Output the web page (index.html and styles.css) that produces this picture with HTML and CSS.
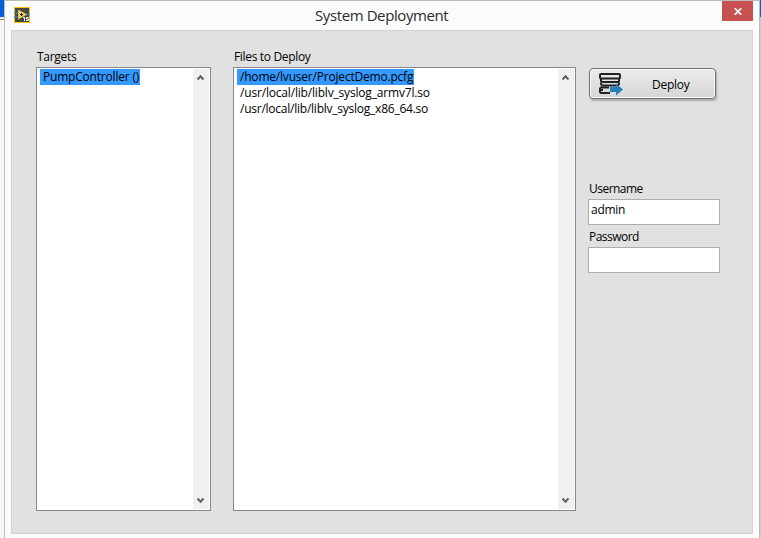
FILE: index.html
```
<!DOCTYPE html>
<html lang="en">
<head>
<meta charset="utf-8">
<title>System Deployment</title>
<link rel="stylesheet" href="styles.css">
</head>
<body>
<div class="desktop">
  <div class="behind"></div>
  <main class="window">
    <header class="titlebar">
      <svg class="app-icon" width="16" height="16" viewBox="0 0 16 16">
        <rect width="16" height="16" fill="#fcc010"/>
        <rect x="1" y="1" width="14" height="14" fill="#454749"/>
        <path d="M0 6h5M0 10h4M12 7.500h4" stroke="#2c83b8" stroke-width="1.600"/>
        <path d="M5 3v9l8-4.500z" fill="#f4cf60"/>
        <path d="M4.500 3v9.500" stroke="#e8b830"/>
        <path d="M6 7.500h3M7.500 6v3" stroke="#222"/>
        <path d="M9 10.500h1.500V14M14.500 10.500h-2v1.500h2v1.500h-2.500" fill="none" stroke="#fff"/>
      </svg>
      <h1 class="title"><span>System Deployment</span></h1>
      <button class="close" aria-label="Close">
        <svg width="8" height="7" viewBox="0 0 8 7"><path d="M.7 .2l6.600 6.600M7.300 .2L.7 6.800" stroke="#fff" stroke-width="1.700"/></svg>
      </button>
    </header>
    <div class="panel">
      <section class="group targets">
        <h2 class="label"><span class="t-targets">Targets</span></h2>
        <div class="listbox">
          <ul class="items"><li class="selected"><span class="t-pump">PumpController ()</span></li></ul>
          <div class="scroll">
            <svg width="7" height="7" viewBox="0 0 7 7"><path d="M.5 5.500l3-3.200 3 3.200" fill="none" stroke="#606060" stroke-width="2"/></svg>
            <svg width="7" height="7" viewBox="0 0 7 7"><path d="M.5 1.500l3 3.200 3-3.200" fill="none" stroke="#606060" stroke-width="2"/></svg>
          </div>
        </div>
      </section>
      <section class="group files">
        <h2 class="label"><span class="t-files">Files to Deploy</span></h2>
        <div class="listbox">
          <ul class="items">
            <li class="selected"><span class="t-home">/home/lvuser/ProjectDemo.pcfg</span></li>
            <li><span class="t-arm">/usr/local/lib/liblv_syslog_armv7l.so</span></li>
            <li><span class="t-x86">/usr/local/lib/liblv_syslog_x86_64.so</span></li>
          </ul>
          <div class="scroll">
            <svg width="7" height="7" viewBox="0 0 7 7"><path d="M.5 5.500l3-3.200 3 3.200" fill="none" stroke="#606060" stroke-width="2"/></svg>
            <svg width="7" height="7" viewBox="0 0 7 7"><path d="M.5 1.500l3 3.200 3-3.200" fill="none" stroke="#606060" stroke-width="2"/></svg>
          </div>
        </div>
      </section>
      <section class="side">
        <button class="deploy">
          <svg width="25" height="24" viewBox="0 0 25 24">
            <g fill="none" stroke="#202224" stroke-width="2">
              <rect x="2" y="2" width="20" height="4.500" rx="1"/>
              <path d="M3 6.500v2.500l1 1h16l1-1v-2.500"/>
              <path d="M3 10.500v1.500l1 1.500h16l1-1.500v-1.500"/>
              <path d="M11 15.500H3l-1 1v3.500l1 1h9M2 18h3"/>
            </g>
            <path d="M12 15h6v-3.500l7 6-7 6v-3.500h-6z" fill="#2980b9"/>
          </svg>
          <span class="t-deploy">Deploy</span>
        </button>
        <label class="field"><span class="label"><span class="t-user">Username</span></span>
          <span class="input"><span class="t-admin">admin</span></span></label>
        <label class="field"><span class="label"><span class="t-pass">Password</span></span>
          <span class="input"></span></label>
      </section>
    </div>
  </main>
  <div class="behind right"></div>
</div>
</body>
</html>
```
FILE: styles.css
```
* { box-sizing: border-box; }
body { margin: 0; overflow: hidden; font: 12px/16px "Open Sans", "Noto Sans", sans-serif; color: #000; }
h1, h2, ul { margin: 0; padding: 0; font-weight: normal; list-style: none; }
.desktop { display: flex; width: 761px; height: 538px; background: #fff; }
.behind { width: 4px; background: linear-gradient(#0560d8 17px, #e8e8e8 17px 19px, #888 19px 20px, #f6f6f6 20px); }
.behind.right { width: 1px; background: linear-gradient(#0560d8 17px, #c8c8c8 17px); }
.window { width: 756px; border: 1px solid #bcbcbc; border-bottom: 0; background: #fbfbfb; padding: 0 6px; }
.titlebar { display: flex; height: 29px; align-items: flex-start; }
.app-icon { margin: 6px 0 0 3px; flex: none; }
.title { flex: 1; padding-left: 285px; font-size: 15px; letter-spacing: -0.4px; line-height: 29px; color: #2b2b2b; white-space: nowrap; }
.close { width: 31px; height: 20px; padding: 0; border: 0; background: #c75050; display: flex; align-items: center; justify-content: center; }
.panel { display: flex; width: 742px; height: 504px; padding: 18px 0 0 24px; border: 1px solid #d2d2d2; background: #e1e1e1; }
.group { display: flex; flex-direction: column; }
.targets { width: 175px; margin-right: 22px; }
.files { width: 343px; margin-right: 12px; }
.label { display: block; font-size: 12px; height: 18px; line-height: 16px; padding-left: 1px; white-space: nowrap; }
.listbox { display: flex; height: 444px; padding: 1px 1px 1px 3px; border: 1px solid #828790; background: #fff; }
.items { flex: 1; white-space: nowrap; }
.items li { width: fit-content; height: 16px; line-height: 16px; padding: 0 1px 0 3px; }
.items .selected { background: #3399ff; }
.scroll { width: 16px; height: 440px; background: #f0f0f0; display: flex; flex-direction: column; align-items: center; justify-content: space-between; padding: 5px 1px 5px 0; }
.side { width: 132px; padding-top: 19px; }
.deploy { display: flex; align-items: center; width: 127px; height: 31px; margin: 0 0 82px 1px; padding: 0 0 0 8px; border: 1px solid #707070; border-radius: 4px; background: linear-gradient(#ececec, #d6d6d6); box-shadow: inset 0 0 0 1px #fafafa, 1px 2px 2px #aaa; font: inherit; line-height: 18px; color: #000; }
.deploy svg { flex: none; margin-right: 29px; }
.deploy span { padding-top: 2px; }
.field { display: block; height: 48px; }
.input { display: block; width: 132px; height: 26px; border: 1px solid #abadb3; background: #fff; padding: 2px 2px; line-height: 16px; }
.t-targets, .t-admin, .t-deploy { letter-spacing: -0.27px; }
.t-files { letter-spacing: -0.33px; }
.t-pump { letter-spacing: -0.2px; }
.t-home { letter-spacing: -0.2px; }
.t-arm { letter-spacing: -0.18px; }
.t-x86 { letter-spacing: -0.24px; }
.t-user, .t-pass { letter-spacing: -0.52px; }
```
